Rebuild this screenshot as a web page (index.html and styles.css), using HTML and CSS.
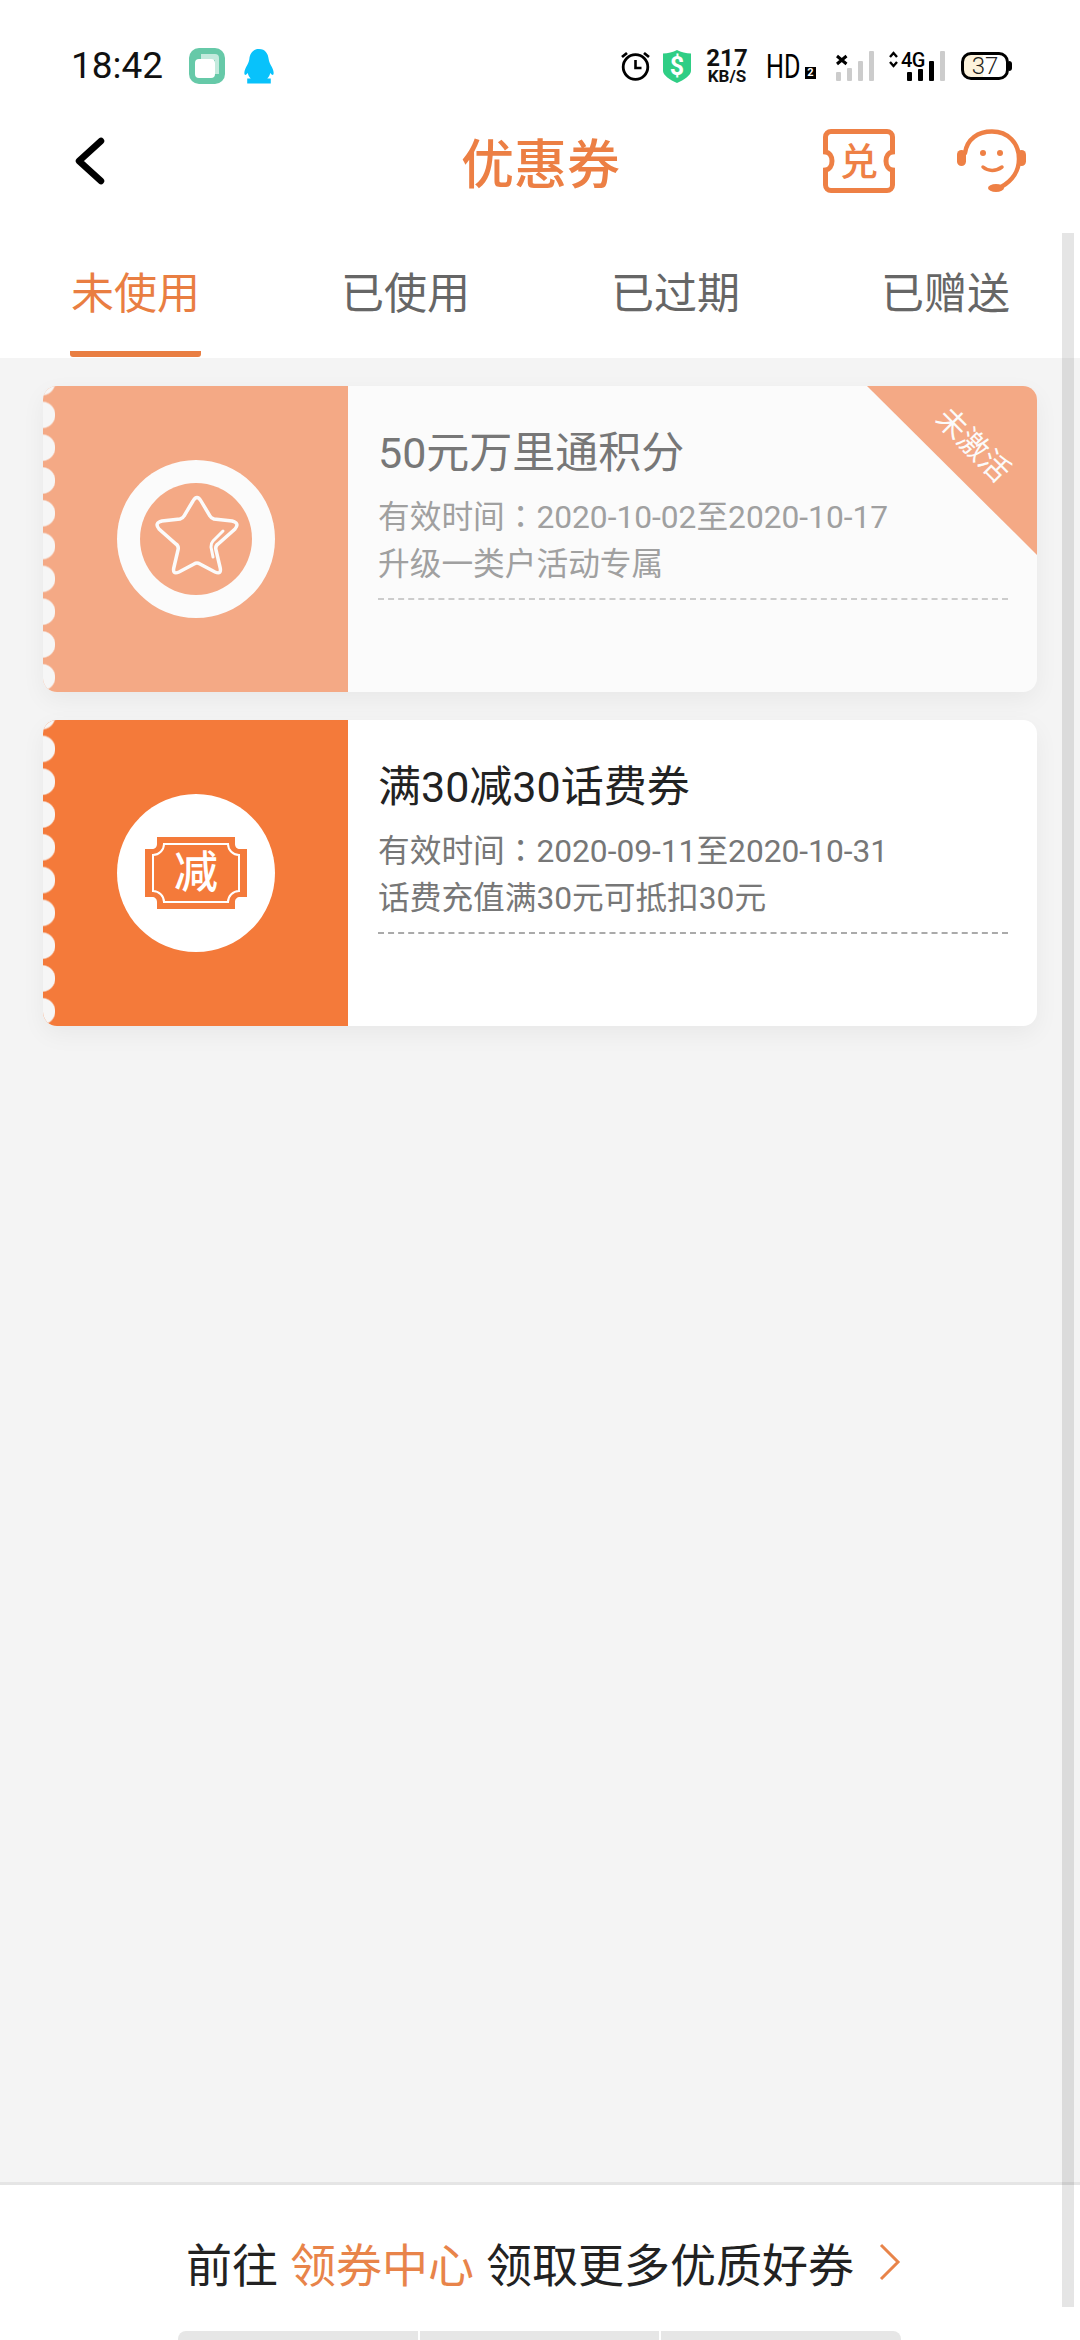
FILE: index.html
```html
<!DOCTYPE html>
<html lang="zh-CN">
  <head>
    <meta charset="UTF-8" />
    <meta name="viewport" content="width=device-width, initial-scale=1.0" />
    <title>优惠券</title>
    <link rel="stylesheet" href="styles.css">
  </head>
  <body>
    <div class="page">
      <header class="top">
        <div class="status">
          <div class="status-left">
            <span class="time">18:42</span>
            <svg class="app-icon" width="36" height="36" viewBox="0 0 36 36">
              <rect width="36" height="36" rx="10" fill="#66c9a8" />
              <path d="M12 6h14a4 4 0 0 1 4 4v16h-4V12H12z" fill="#c3eadd" />
              <rect x="6" y="11" width="20" height="19" rx="4" fill="#fff" />
            </svg>
            <svg class="qq-icon" width="30" height="35" viewBox="0 0 28 35" preserveAspectRatio="none">
              <path d="M14 0c6 0 8.600 5 9 10 .3 3 1.500 5 3 8 1.600 3.500 2 6 1.400 7.500-.5 1-1.500.2-2.900-1.500-.4 2-1.300 4-2.800 5.500H25v5H3v-5h3.300C4.800 28 3.900 26 3.500 24 2.100 25.700 1.100 26.500.600 25.500 0 24 .4 21.500 2 18c1.500-3 2.700-5 3-8C5.400 5 8 0 14 0z" fill="#08c2fb" />
            </svg>
          </div>
          <div class="status-right">
            <svg class="st-alarm" width="29" height="30" viewBox="0 0 29 30">
              <circle cx="14.500" cy="16" r="12.300" fill="none" stroke="#000" stroke-width="2.800" />
              <path d="M14.500 9v8h6" fill="none" stroke="#000" stroke-width="2.600" />
              <path d="M1 6l5-4M28 6l-5-4" stroke="#000" stroke-width="2.800" />
            </svg>
            <svg class="st-shield" width="28" height="33" viewBox="0 0 28 33">
              <path d="M14 0c4 2 9 3.500 14 3.500V21c0 4-7 9-14 12C7 30 0 25 0 21V3.500C5 3.500 10 2 14 0z" fill="#2fce85" />
              <text x="14" y="25" class="shield-text">$</text>
            </svg>
            <div class="st-speed">
              <span class="speed-num">217</span>
              <span class="speed-unit">KB/S</span>
            </div>
            <div class="st-hd">
              <span class="hd-text">HD</span>
              <span class="hd-num">2</span>
            </div>
            <svg class="st-sig" width="38" height="32" viewBox="0 0 38 32">
              <path d="M1 6l9.500 8M10.500 6L1 14" stroke="#000" stroke-width="3" />
              <rect x="0" y="22" width="5" height="9" rx="1" fill="#ccc" />
              <rect x="11" y="18" width="5" height="13" rx="1" fill="#ccc" />
              <rect x="22" y="11" width="5" height="20" rx="1" fill="#ccc" />
              <rect x="33" y="1" width="5" height="30" rx="1" fill="#ccc" />
            </svg>
            <div class="st-net">
              <svg width="56" height="32" viewBox="0 0 56 32">
                <path d="M1 7l3.500-4L8 7M1 12l3.500 4L8 12" fill="none" stroke="#000" stroke-width="2.400" />
                <rect x="18" y="22" width="5" height="9" rx="1" fill="#000" />
                <rect x="29" y="19" width="5" height="12" rx="1" fill="#000" />
                <rect x="40" y="11" width="5" height="20" rx="1" fill="#000" />
                <rect x="51" y="1" width="5" height="30" rx="1" fill="#ccc" />
              </svg>
              <span class="net-text">4G</span>
            </div>
            <div class="st-battery"><span class="battery-num">37</span></div>
          </div>
        </div>

        <nav class="nav">
          <svg class="back" width="30" height="48" viewBox="0 0 30 48">
            <path d="M26 4L4 24l22 20" fill="none" stroke="#000" stroke-width="6.500" stroke-linecap="round" stroke-linejoin="round" />
          </svg>
          <h1 class="nav-title">优惠券</h1>
          <div class="nav-actions">
            <svg width="72" height="64" viewBox="0 0 72 64">
              <path d="M8 2.500h56a5.500 5.500 0 0 1 5.500 5.500v15c-4 .5-6.500 4.500-6.500 9s2.500 8.500 6.500 9v15a5.500 5.500 0 0 1-5.500 5.500H8A5.500 5.500 0 0 1 2.500 56V41c4-.5 6.500-4.500 6.500-9s-2.500-8.500-6.500-9V8A5.500 5.500 0 0 1 8 2.500z" fill="none" stroke="#ee8045" stroke-width="5" />
              <text x="36" y="46" class="redeem-text">兑</text>
            </svg>
            <svg width="69" height="64" viewBox="0 0 69 64">
              <path d="M8 24C10 10 21 2.500 35 2.500 51 2.500 62 14 62 30 62 42 55 52 44 58" fill="none" stroke="#ee8045" stroke-width="4.500" stroke-linecap="round" />
              <rect x="0" y="21" width="9" height="16" rx="4.500" fill="#ee8045" />
              <rect x="60" y="21" width="9" height="16" rx="4.500" fill="#ee8045" />
              <ellipse cx="39" cy="59" rx="8" ry="4" fill="#ee8045" />
              <circle cx="26" cy="24" r="3" fill="#ee8045" />
              <circle cx="43" cy="24" r="3" fill="#ee8045" />
              <path d="M26 38c5 4.500 13 4.500 19 0" fill="none" stroke="#ee8045" stroke-width="3.500" stroke-linecap="round" />
            </svg>
          </div>
        </nav>

        <ul class="tabs">
          <li class="tab tab-active">未使用</li>
          <li class="tab">已使用</li>
          <li class="tab">已过期</li>
          <li class="tab">已赠送</li>
        </ul>
      </header>

      <main class="list">
        <article class="coupon coupon-off">
          <div class="coupon-side">
            <div class="badge">
              <svg width="112" height="112" viewBox="0 0 112 112">
                <circle cx="56" cy="56" r="56" fill="#f4a985" />
                <path d="M53 18Q57 11 61 18L70 33Q71 35 74 36L92 38Q100 40 95 46L78 61Q75 63 76 67L80 84Q82 92 75 89L60 81Q57 79 54 81L39 89Q32 92 34 84L38 67Q39 63 36 61L19 46Q14 40 22 38L40 36Q43 35 44 33Z" fill="none" stroke="#fbfbfb" stroke-width="3.500" />
                <path d="M83 48L73 58C71 60 71 62 71 64L73 74" fill="none" stroke="#fbfbfb" stroke-width="3" stroke-linecap="round" />
              </svg>
            </div>
          </div>
          <div class="coupon-body">
            <h2 class="coupon-title">50元万里通积分</h2>
            <p class="coupon-meta">有效时间<span class="colon" lang="zh-TW">：</span>2020-10-02至2020-10-17<br />升级一类户活动专属</p>
            <div class="coupon-dash"></div>
          </div>
          <div class="ribbon"><span class="ribbon-text">未激活</span></div>
        </article>

        <article class="coupon">
          <div class="coupon-side">
            <div class="badge">
              <svg width="102" height="72" viewBox="0 0 102 72">
                <path d="M12 0h78v7c0 3 2 5 5 5h7v48h-7c-3 0-5 2-5 5v7H12v-7c0-3-2-5-5-5H0V12h7c3 0 5-2 5-5z" fill="#f47a3a" />
                <path d="M19 7h64c0 6 5 11 11 11v36c-6 0-11 5-11 11H19c0-6-5-11-11-11V18c6 0 11-5 11-11z" fill="none" stroke="#fff" stroke-width="2" />
                <text x="51" y="51" class="ticket-text">减</text>
              </svg>
            </div>
          </div>
          <div class="coupon-body">
            <h2 class="coupon-title">满30减30话费券</h2>
            <p class="coupon-meta">有效时间<span class="colon" lang="zh-TW">：</span>2020-09-11至2020-10-31<br />话费充值满30元可抵扣30元</p>
            <div class="coupon-dash"></div>
          </div>
        </article>
      </main>

      <footer class="foot">
        <div class="foot-link">
          <span>前往</span>
          <span class="foot-hl">领券中心</span>
          <span>领取更多优质好券</span>
          <svg class="foot-arrow" width="22" height="38" viewBox="0 0 22 38">
            <path d="M2 2l17 17L2 36" fill="none" stroke="#e8844a" stroke-width="3" />
          </svg>
        </div>
        <div class="foot-tabs">
          <span></span>
          <span></span>
          <span></span>
        </div>
      </footer>

      <div class="scrollbar"></div>
    </div>
  </body>
</html>
```

FILE: styles.css
```css
* {
  box-sizing: border-box;
}

html,
body {
  margin: 0;
  padding: 0;
}

body {
  font-family: Roboto, "Noto Sans CJK SC", sans-serif;
  color: #222;
}

.page {
  position: relative;
  display: flex;
  flex-direction: column;
  width: 1080px;
  height: 2340px;
  overflow: hidden;
  background: #f4f4f4;
}

/* Status bar */
.top {
  background: #fff;
}

.status {
  display: flex;
  justify-content: space-between;
  align-items: center;
  height: 100px;
  padding: 32px 71px 0 71px;
}

.status-left,
.status-right {
  display: flex;
  align-items: center;
}

.time {
  width: 90px;
  font-size: 37px;
  line-height: 40px;
  white-space: nowrap;
  color: #111;
}

.app-icon {
  margin-left: 28px;
}

.qq-icon {
  margin-left: 19px;
}

.status-right svg {
  display: block;
}

.st-shield {
  margin-left: 13px;
}

.st-speed {
  display: flex;
  flex-direction: column;
  align-items: center;
  width: 40px;
  margin-left: 16px;
  font-weight: 700;
  color: #111;
}

.speed-num {
  font-size: 24px;
  line-height: 21px;
}

.speed-unit {
  font-size: 17px;
  line-height: 15px;
  white-space: nowrap;
}

.shield-text {
  font: 700 25px Roboto, sans-serif;
  fill: #fff;
  text-anchor: middle;
}

.st-hd {
  display: flex;
  align-items: flex-end;
  width: 50px;
  height: 26px;
  margin-left: 19px;
}

.hd-text {
  width: 39px;
  font-size: 34px;
  line-height: 26px;
  white-space: nowrap;
  color: #000;
  transform: scaleX(0.74);
  transform-origin: left;
}

.hd-num {
  width: 11px;
  height: 12px;
  font-size: 11px;
  font-weight: 700;
  line-height: 12px;
  text-align: center;
  color: #fff;
  background: #000;
}

.st-sig {
  margin-left: 20px;
}

.st-net {
  position: relative;
  width: 56px;
  height: 32px;
  margin-left: 15px;
}

.net-text {
  position: absolute;
  top: 0;
  left: 12px;
  font-size: 20px;
  font-weight: 500;
  line-height: 20px;
  white-space: nowrap;
  color: #000;
  letter-spacing: -0.5px;
}

.st-battery {
  position: relative;
  width: 48px;
  height: 28px;
  margin-left: 16px;
  border: 3px solid #000;
  border-radius: 10px;
  background: linear-gradient(90deg, #fdf3dc 45%, #fff 45%);
  text-align: center;
}

.st-battery::after {
  content: "";
  position: absolute;
  top: 6px;
  right: -6px;
  width: 3px;
  height: 10px;
  border-radius: 0 3px 3px 0;
  background: #000;
}

.battery-num {
  display: block;
  font-size: 24px;
  font-weight: 300;
  line-height: 22px;
  color: #222;
}

/* Nav */
.nav {
  display: grid;
  grid-template-columns: 1fr auto 1fr;
  align-items: center;
  height: 122px;
  padding: 0 54px 0 75px;
}

.nav-title {
  position: relative;
  left: -10px;
  margin: 0;
  font-family: "Noto Sans CJK SC", sans-serif;
  font-size: 53px;
  font-weight: 500;
  line-height: 60px;
  color: #ec7f44;
}

.nav-actions {
  display: flex;
  justify-content: flex-end;
  align-items: center;
  gap: 62px;
}

/* Tabs */
.tabs {
  display: flex;
  justify-content: space-between;
  height: 136px;
  margin: 0;
  padding: 0 69px 0 70px;
  list-style: none;
}

.tab {
  width: 131px;
  height: 135px;
  padding-top: 37px;
  border-bottom: 6px solid transparent;
  border-radius: 0 0 3px 3px;
  font-family: "Noto Sans CJK SC", sans-serif;
  font-size: 43px;
  line-height: 62px;
  text-align: center;
  white-space: nowrap;
  color: #666;
}

.tab-active {
  border-bottom-color: #e97e42;
  color: #e97e42;
}

/* Coupon list */
.list {
  display: flex;
  flex: 1;
  flex-direction: column;
  gap: 28px;
  padding: 28px 43px;
}

.coupon {
  position: relative;
  display: flex;
  height: 306px;
  overflow: hidden;
  border-radius: 14px;
  background: #fff;
  box-shadow: 0 8px 24px rgba(0, 0, 0, 0.05);
}

.coupon-side {
  position: relative;
  display: flex;
  justify-content: center;
  align-items: center;
  width: 305px;
  background: #f47a3a;
}

/* scalloped left edge */
.coupon-side::before {
  content: "";
  position: absolute;
  top: 0;
  bottom: 0;
  left: 0;
  width: 12px;
  background-image: radial-gradient(circle at -1px 16.4px, #f6f6f6 12.5px, transparent 14px);
  background-position: 0 12.5px;
  background-size: 12px 32.8px;
}

.badge {
  display: flex;
  justify-content: center;
  align-items: center;
  width: 158px;
  height: 158px;
  border-radius: 50%;
  background: #fff;
}

.coupon-body {
  flex: 1;
  padding: 42px 29px 0 30px;
}

.coupon-title {
  margin: 0;
  font-family: Roboto, "Noto Sans CJK SC", sans-serif;
  font-size: 43px;
  font-weight: 400;
  line-height: 50px;
  color: #222;
}

.coupon-meta {
  margin: 13px 0 0;
  font-size: 31.7px;
  line-height: 47px;
  color: #777;
}

.colon {
  font-family: "Noto Sans CJK TC", sans-serif;
}

.coupon-dash {
  margin-top: 10px;
  border-top: 2px dashed #aaa;
}

.ticket-text {
  font: 500 44px "Noto Sans CJK SC", sans-serif;
  fill: #fff;
  text-anchor: middle;
}

.redeem-text {
  font: 500 38px "Noto Sans CJK SC", sans-serif;
  fill: #ee8045;
  text-anchor: middle;
}

/* Inactive coupon is a paler copy */
.coupon-off {
  background: #fbfbfb;
}

.coupon-off .coupon-side {
  background: #f4a985;
}

.coupon-off .badge {
  background: #fbfbfb;
}

.coupon-off .coupon-title {
  color: #777;
}

.coupon-off .coupon-meta {
  color: #a0a0a0;
}

.coupon-off .coupon-dash {
  border-top-color: #ccc;
}

.ribbon {
  position: absolute;
  top: 0;
  right: 0;
  width: 170px;
  height: 169px;
  background: #f4a985;
  clip-path: polygon(0 0, 100% 0, 100% 100%);
}

.ribbon-text {
  position: absolute;
  top: 40px;
  left: 48px;
  width: 120px;
  font-family: "Noto Sans CJK SC", sans-serif;
  font-size: 30px;
  line-height: 34px;
  text-align: center;
  color: #fbfbfb;
  transform: rotate(45deg);
}

/* Footer */
.foot {
  position: relative;
  height: 158px;
  border-top: 3px solid #e5e5e5;
  background: #fff;
}

.foot-link {
  display: flex;
  justify-content: center;
  align-items: center;
  gap: 12px;
  height: 154px;
  padding-left: 7px;
  font-family: "Noto Sans CJK SC", sans-serif;
  font-size: 46px;
  line-height: 60px;
  color: #222;
}

.foot-hl {
  color: #e8844a;
}

.foot-arrow {
  margin-left: 13px;
}

.foot-tabs {
  position: absolute;
  bottom: -6px;
  left: 178px;
  display: flex;
  gap: 2px;
  width: 723px;
  height: 15px;
  overflow: hidden;
  border-radius: 8px 8px 0 0;
}

.foot-tabs span {
  flex: 1;
  background: #e6e6e6;
}

/* scrollbar lies over the page */
.scrollbar {
  position: absolute;
  top: 233px;
  left: 1062px;
  width: 12px;
  height: 2074px;
  background: rgba(0, 0, 0, 0.1);
}
```
